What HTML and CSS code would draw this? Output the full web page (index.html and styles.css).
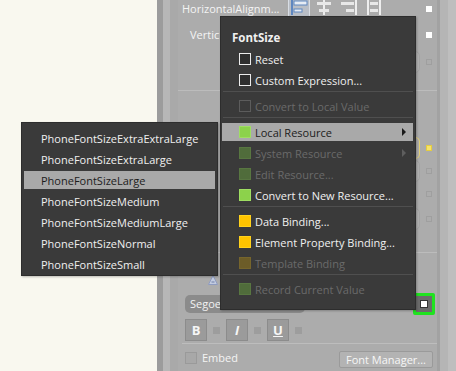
FILE: index.html
```html
<!DOCTYPE html>
<html>
<head>
<meta charset="utf-8">
<link rel="stylesheet" href="styles.css">
</head>
<body>
<div class="app">
  <div class="canvas"></div>
  <div class="splitter"><div class="s1"></div><div class="s2"></div></div>
  <div class="inspector">
    <div class="row r1">
      <div class="cell">
        <span class="lbl w106">HorizontalAlignm...</span>
        <div class="aligns">
          <svg class="al sel" width="22" height="17" viewBox="0 0 22 17"><rect x="0.5" y="-2" width="21" height="18.5" fill="#b9bec6" stroke="#d8dde4"/><rect x="3" y="-2" width="2" height="17" fill="#5f87c0"/><rect x="6" y="1" width="13" height="4" fill="#e6ecf4" stroke="#5f87c0" stroke-width="1"/><rect x="6" y="9" width="8" height="3" fill="#e6ecf4" stroke="#5f87c0" stroke-width="1"/></svg>
          <svg class="al" width="22" height="17" viewBox="0 0 22 17"><rect x="10" y="-2" width="2" height="17" fill="#eeeeee"/><rect x="4" y="2" width="14" height="3" fill="#e8e8e8"/><rect x="6" y="9" width="10" height="3" fill="#e8e8e8"/></svg>
          <svg class="al" width="22" height="17" viewBox="0 0 22 17"><rect x="17" y="-2" width="2" height="17" fill="#eeeeee"/><rect x="3" y="2" width="13" height="3" fill="#e8e8e8"/><rect x="8" y="9" width="8" height="3" fill="#e8e8e8"/></svg>
          <svg class="al" width="22" height="17" viewBox="0 0 22 17"><rect x="4" y="-2" width="2" height="17" fill="#eeeeee"/><rect x="16" y="-2" width="2" height="17" fill="#eeeeee"/><rect x="7" y="2" width="8" height="3" fill="#e8e8e8"/><rect x="7" y="9" width="8" height="3" fill="#e8e8e8"/></svg>
        </div>
      </div>
      <div class="mk"><i class="sq white"></i></div>
    </div>
    <div class="row r2">
      <div class="cell"><span class="lbl indent">Vertic</span></div>
      <div class="mk"><i class="sq white"></i></div>
    </div>
    <div class="row r3">
      <div class="cell"><div class="ghost"></div></div>
      <div class="mk"><i class="sq faint"></i></div>
    </div>
    <div class="hline l1"></div>
    <div class="row r4">
      <div class="cell"><div class="ghost bracket"></div></div>
      <div class="mk"><i class="sq yellow"></i></div>
    </div>
    <div class="row r5">
      <div class="cell"><div class="ghost"></div></div>
      <div class="mk"><i class="sq faint"></i></div>
    </div>
    <div class="row r6">
      <div class="cell"></div>
      <div class="mk"><i class="sq faint"></i></div>
    </div>
    <div class="row r7">
      <div class="cell"><div class="ghost"></div></div>
      <div class="mk"><i class="sq faint"></i></div>
    </div>
    <div class="hline l2"></div>
    <div class="row ra">
      <div class="cell">
        <svg class="aicon" width="10" height="10" viewBox="0 0 10 10"><path d="M5 0.5 L9.5 9.5 L0.5 9.5 Z" fill="#c2cbe0" stroke="#8e9bc0" stroke-width="1"/><path d="M3.5 7 H6.5" stroke="#6f7fa8" stroke-width="1"/></svg>
      </div>
    </div>
    <div class="row rfont">
      <div class="cell"><div class="dropdown">Segoe</div></div>
      <div class="mk mkg"><span class="green"><i></i></span></div>
    </div>
    <div class="row rbiu">
      <div class="cell">
        <span class="tb">B</span><i class="sq small"></i>
        <span class="tb it">I</span><i class="sq small"></i>
        <span class="tb un">U</span><i class="sq small"></i>
      </div>
    </div>
    <div class="hline l3"></div>
    <div class="row remb">
      <div class="cell">
        <span class="cb"></span><span class="lbl emb">Embed</span>
        <span class="fm">Font Manager...</span>
      </div>
    </div>
  </div>
  <div class="rightbar"><div class="rb1"></div><div class="rb2"></div><div class="rb3"></div></div>
</div>

<div class="menu main">
  <div class="title">FontSize</div>
  <div class="mi"><i class="ic chk"></i>Reset</div>
  <div class="mi"><i class="ic chk"></i>Custom Expression...</div>
  <div class="msep"></div>
  <div class="mi dis"><i class="ic chkd"></i>Convert to Local Value</div>
  <div class="msep"></div>
  <div class="mi hi"><i class="ic grn"></i>Local Resource<span class="arr"></span></div>
  <div class="mi dis"><i class="ic grnd"></i>System Resource<span class="arr dark"></span></div>
  <div class="mi dis"><i class="ic grnd"></i>Edit Resource...</div>
  <div class="mi"><i class="ic grn"></i>Convert to New Resource...</div>
  <div class="msep"></div>
  <div class="mi"><i class="ic yel"></i>Data Binding...</div>
  <div class="mi"><i class="ic yel"></i>Element Property Binding...</div>
  <div class="mi dis"><i class="ic yeld"></i>Template Binding</div>
  <div class="msep"></div>
  <div class="mi dis"><i class="ic grnd"></i>Record Current Value</div>
</div>

<div class="menu sub">
  <div class="si">PhoneFontSizeExtraExtraLarge</div>
  <div class="si">PhoneFontSizeExtraLarge</div>
  <div class="si hi">PhoneFontSizeLarge</div>
  <div class="si">PhoneFontSizeMedium</div>
  <div class="si">PhoneFontSizeMediumLarge</div>
  <div class="si">PhoneFontSizeNormal</div>
  <div class="si">PhoneFontSizeSmall</div>
</div>
</body>
</html>
```

FILE: styles.css
```css
* { box-sizing: border-box; }
body {
  margin: 0;
  width: 456px;
  height: 371px;
  overflow: hidden;
  position: relative;
  font-family: "Open Sans", "Liberation Sans", sans-serif;
  font-size: 11px;
  color: #f2f2f2;
}
.app { display: flex; height: 371px; }
.canvas { width: 157px; background: #f9f8ef; }
.splitter { display: flex; width: 13px; }
.s1 { width: 6px; background: #9c9c9c; }
.s2 { width: 7px; background: #b7b7b7; }
.inspector {
  width: 267px;
  background: #acacac;
  display: flex;
  flex-direction: column;
  border-left: 8px solid #a9a9a9;
}
.rightbar { flex: 1; display: flex; }
.rb1 { width: 3px; background: #a2a2a2; }
.rb2 { width: 8px; background: #b5b5b5; }
.rb3 { flex: 1; background: #bebebe; }

.row { display: flex; align-items: center; flex: none; }
.cell { flex: 1; display: flex; align-items: center; padding-left: 4px; height: 100%; }
.mk { width: 17px; display: flex; justify-content: center; align-items: center; }
.lbl { color: #f4f4f4; white-space: nowrap; line-height: 14px; }
.w106 { width: 106px; }
.indent { padding-left: 8px; }
.aligns { display: flex; gap: 3px; align-self: flex-start; }
.al { display: block; }

.sq { display: block; width: 6px; height: 6px; }
.sq.white { background: #ffffff; }
.sq.faint { border: 1px solid #9f9f9f; }
.sq.yellow { background: #f6e36a; border: 1px solid #e4cc40; }

.r1 { height: 18px; }
.r2 { height: 18px; margin-top: 8px; }
.r3 { height: 24px; margin-top: 6px; }
.r4 { height: 24px; margin-top: 45px; }
.r5 { height: 22px; }
.r6 { height: 22px; margin-top: 1px; }
.r7 { height: 26px; margin-top: 1px; }
.ghost {
  width: 196px;
  height: 22px;
  margin-left: auto;
  border: 1px solid #a3a3a3;
  border-radius: 5px;
  background: #b0b0b0;
}
.ghost.bracket { border: 1px solid #e2cf74; border-left: none; background: #acacac; }

.hline { height: 1px; background: #bcbcbc; flex: none; }
.l1 { margin-top: 16px; }
.l2 { margin-top: 20px; }
.l3 { margin: 2px 0 0 4px; background: #bdbdbd; }

.ra { height: 14px; margin-top: 20px; }
.aicon { margin-left: 26px; display: block; }
.rfont { height: 22px; margin-top: 6px; }
.dropdown {
  width: 120px;
  height: 18px;
  border-radius: 5px;
  background: #8b8b8b;
  color: #f2f2f2;
  padding-left: 5px;
  line-height: 18px;
  margin-left: 3px;
}
.mkg { justify-content: flex-start; margin-left: -7px; width: 24px; }
.green {
  width: 22px; height: 22px;
  border: 3px solid #1fe31f;
  border-radius: 2px;
  background: #6b6b6b;
  display: flex; align-items: center; justify-content: center;
}
.green i { display: block; width: 8px; height: 8px; background: #fff; border: 1px solid #333; }

.rbiu { height: 22px; margin-top: 4px; }
.rbiu .cell { padding-left: 7px; }
.tb {
  width: 22px; height: 22px;
  background: #9b9b9b;
  border: 1px solid #8c8c8c;
  color: #f6f6f6;
  font-weight: bold;
  font-size: 13px;
  display: flex; align-items: center; justify-content: center;
}
.tb.it { font-style: italic; }
.tb.un { text-decoration: underline; }
.sq.small { width: 7px; height: 7px; background: #9d9d9d; margin: 0 6px; }

.remb { height: 20px; margin-top: 4px; }
.remb .cell { padding-left: 7px; }
.cb { width: 12px; height: 12px; border: 1px solid #9a9a9a; background: #a8a8a8; }
.emb { margin-left: 5px; }
.fm {
  margin-left: auto;
  margin-right: 4px;
  margin-top: 3px;
  width: 94px; height: 17px;
  border: 1px solid #9a9a9a;
  border-radius: 2px;
  background: #b3b3b3;
  color: #f6f6f6;
  text-align: center;
  line-height: 15px;
}

/* menus */
.menu {
  position: absolute;
  background: #3a3a3a;
  border: 1px solid #2d2d2d;
  color: #f0f0f0;
  box-shadow: 1px 1px 2px rgba(0,0,0,0.25);
  display: flex;
  flex-direction: column;
}
.main { left: 220px; top: 16px; width: 196px; height: 294px; padding-top: 10px; }
.sub { left: 21px; top: 122px; width: 197px; height: 154px; padding-top: 5px; }
.title { height: 22px; line-height: 22px; padding-left: 11px; font-weight: bold; font-size: 11.5px; flex: none; }
.mi {
  height: 18px;
  flex: none;
  margin: 1px 2px 2px 1px;
  padding-left: 17px;
  display: flex; align-items: center;
  white-space: nowrap;
  position: relative;
}
.mi.hi, .si.hi { background: #a9a9a9; color: #1c1c1c; }
.mi.dis { color: #6a6a6a; }
.ic { display: block; width: 12px; height: 12px; margin-right: 4px; flex: none; }
.chk { border: 1px solid #ececec; background: #2f2f2f; }
.chkd { border: 1px solid #5c5c5c; }
.grn { background: #8cd24b; border: 1px solid #9fde62; }
.grnd { background: #506c3b; border: 1px solid #587641; }
.yel { background: #fec300; border: 1px solid #ffd21c; }
.yeld { background: #6c5c28; border: 1px solid #76652c; }
.arr {
  position: absolute;
  right: 7px; top: 5px;
  width: 0; height: 0;
  border-top: 4px solid transparent;
  border-bottom: 4px solid transparent;
  border-left: 4px solid #1a1a1a;
}
.arr.dark { border-left-color: #5e5e5e; }
.msep { height: 5px; flex: none; margin: 0 2px; border-top: 1px solid #4f4f4f; }
.si {
  height: 18px;
  flex: none;
  margin: 1px 2px 2px 2px;
  padding-left: 17px;
  display: flex; align-items: center;
  white-space: nowrap;
}
```
